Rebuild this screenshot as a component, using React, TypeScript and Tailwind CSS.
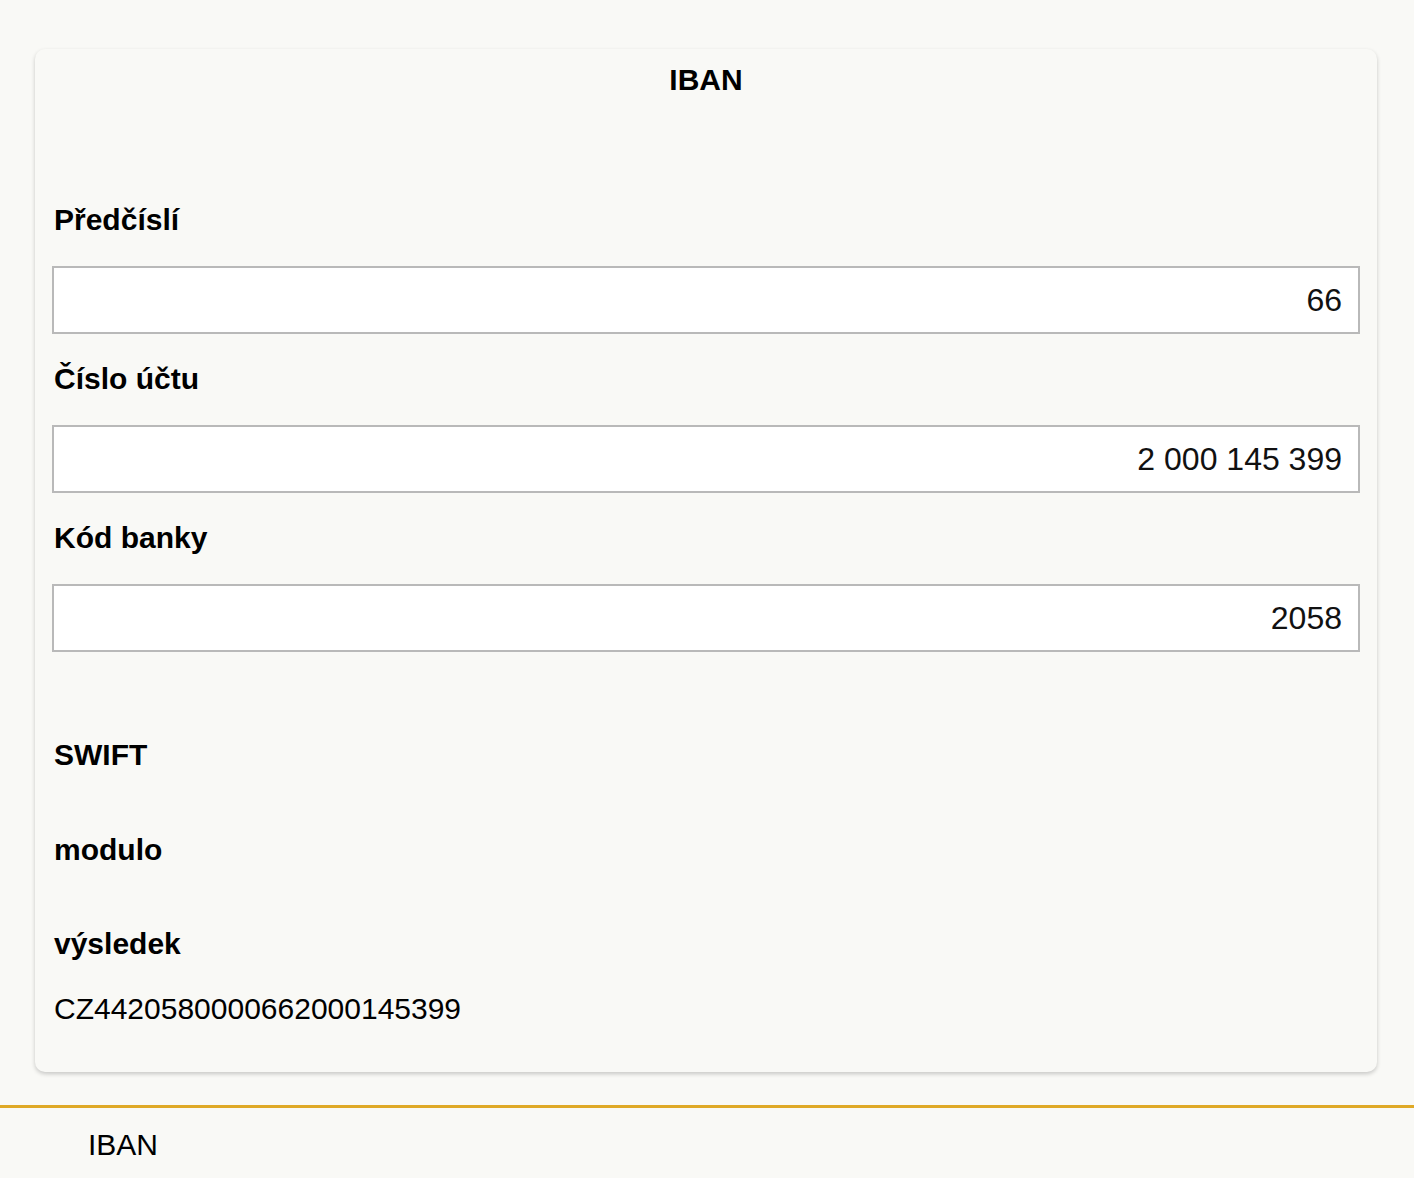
export default function App() {
  const fields = [
    { label: "Předčíslí", value: "66" },
    { label: "Číslo účtu", value: "2 000 145 399" },
    { label: "Kód banky", value: "2058" },
  ];

  return (
    <div className="min-h-[1178px] bg-[#f9f9f6] text-black font-['Liberation_Sans',Arial,sans-serif] pt-[49px] overflow-hidden">
      <div className="ml-[35px] mr-[37px] rounded-[10px] bg-[#f9f9f6] shadow-[0_2px_4px_rgba(0,0,0,0.2)] px-[19px] pt-[13px] pb-[45px]">
        <h1 className="text-center text-[30px] leading-[36px] font-bold">IBAN</h1>

        <div className="mt-[104px]">
          {fields.map((f, i) => (
            <div key={f.label} className={i > 0 ? "mt-[27px]" : ""}>
              <label className="block text-[30px] leading-[36px] font-bold">{f.label}</label>
              <input
                readOnly
                value={f.value}
                className="mt-[28px] -mx-[2px] block w-[calc(100%+4px)] h-[68px] bg-white border-2 border-[#b9b9b9] px-[16px] text-right text-[32px] text-[#111] outline-none"
              />
            </div>
          ))}
        </div>

        <div className="mt-[85px] text-[30px] leading-[36px] font-bold">SWIFT</div>
        <div className="mt-[59px] text-[30px] leading-[36px] font-bold">modulo</div>
        <div className="mt-[58px] text-[30px] leading-[36px] font-bold">výsledek</div>
        <p className="mt-[29px] text-[30px] leading-[36px]">CZ4420580000662000145399</p>
      </div>

      <footer className="mt-[33px] border-t-[3px] border-[#dfa926] pt-[19px] pl-[88px]">
        <span className="text-[30px] leading-[36px]">IBAN</span>
      </footer>
    </div>
  );
}
